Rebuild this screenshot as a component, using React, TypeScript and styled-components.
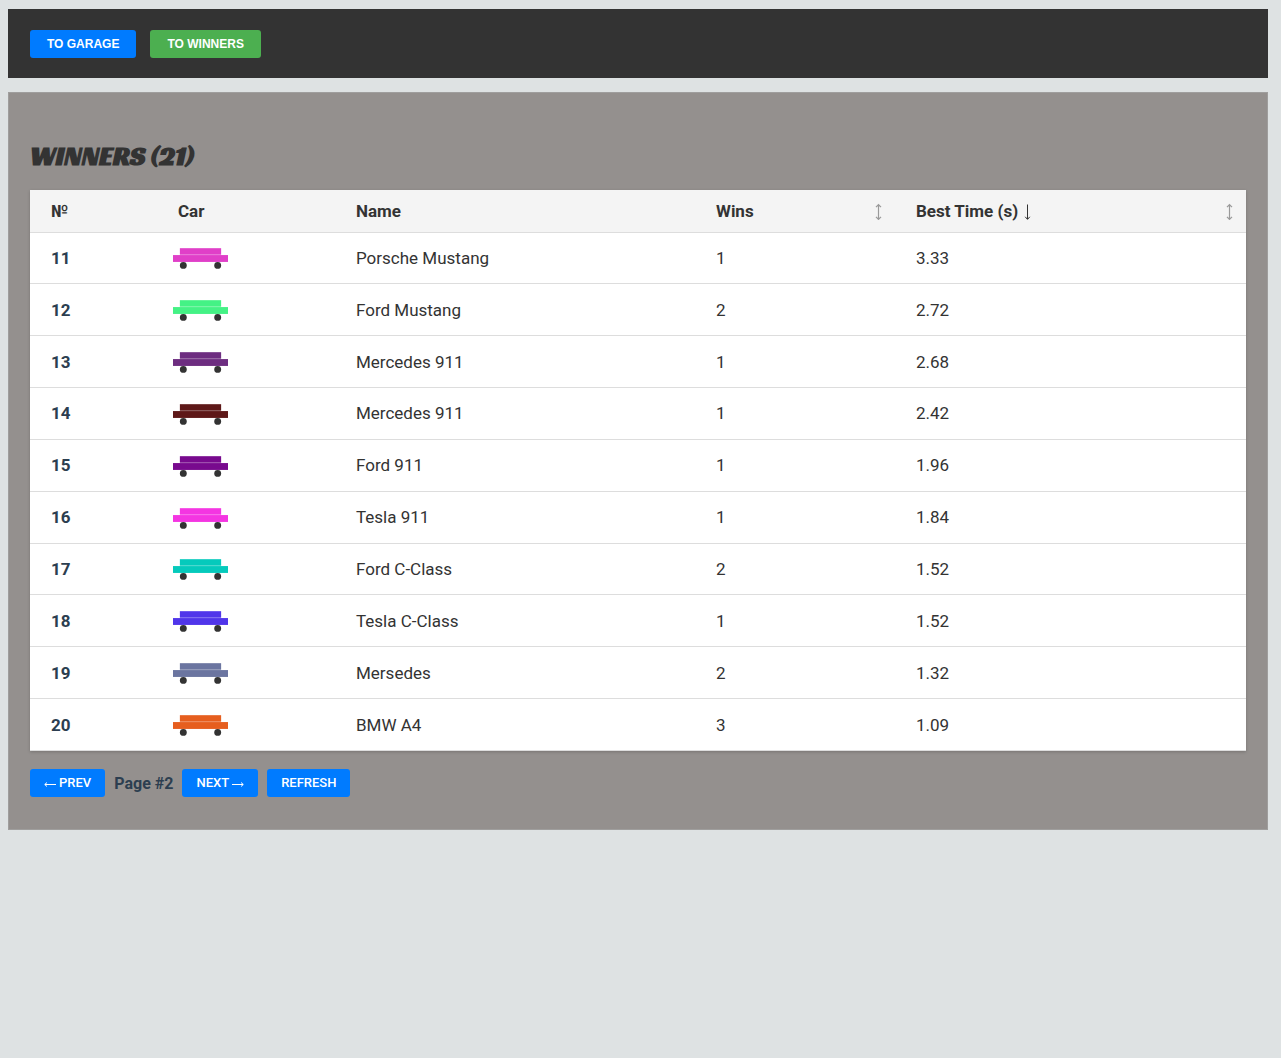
import React from 'react';
import styled, { createGlobalStyle } from 'styled-components';

const GlobalStyle = createGlobalStyle`
  * { box-sizing: border-box; }
  body {
    margin: 9px 13px 9px 8px;
    background: #dee2e3;
    color: #333;
    font-family: Roboto, sans-serif;
  }
`;

const Nav = styled.nav`
  display: flex;
  gap: 14px;
  padding: 21px 22px 20px;
  margin-bottom: 14px;
  background: #333;
`;

const NavButton = styled.button<{ $color: string }>`
  height: 28px;
  padding: 0 17px;
  border: none;
  border-radius: 3px;
  background: ${(p) => p.$color};
  color: #fff;
  font: bold 12px 'Liberation Sans', Arial, sans-serif;
  text-transform: uppercase;
  cursor: pointer;
`;

const Panel = styled.main`
  padding: 48px 21px 32px;
  border: 1px solid #9f9e9d;
  background: #94908e;
`;

const Title = styled.h1`
  margin: 0 0 19px;
  font: 700 27px/30px 'Racing Sans One', Lato, sans-serif;
  text-transform: uppercase;
`;

const Table = styled.table`
  width: 100%;
  height: 561px;
  table-layout: fixed;
  border-collapse: collapse;
  background: #fff;
  box-shadow: 0 1px 3px rgba(0, 0, 0, 0.2);
`;

const Col = styled.col<{ $width?: number }>`
  width: ${(p) => (p.$width ? `${p.$width}px` : 'auto')};
`;

const HeadCell = styled.th`
  height: 42px;
  padding: 0 12px 0 21px;
  border-bottom: 1px solid #ddd;
  background: #f4f4f4;
  font-size: 17px;
  font-weight: 700;
  line-height: 20px;
  text-align: left;
`;

const SortButton = styled.button`
  display: flex;
  justify-content: space-between;
  align-items: center;
  width: 100%;
  padding: 0;
  border: none;
  background: none;
  color: inherit;
  font: inherit;
  cursor: pointer;
`;

const SortLabel = styled.span`
  display: flex;
  align-items: center;
  gap: 5px;
`;

const ArrowIcon = styled.svg<{ $muted?: boolean }>`
  flex: none;
  fill: none;
  stroke: ${(p) => (p.$muted ? '#999' : 'currentColor')};
  stroke-width: ${(p) => (p.$muted ? 1.2 : 1)};
`;

const Cell = styled.td`
  padding: 0 21px;
  border-bottom: 1px solid #ddd;
  font-size: 17px;
`;

const NumberCell = styled(Cell)`
  color: #2c3e50;
  font-weight: 700;
`;

const CarCell = styled(Cell)`
  padding: 2px 16px 0;
`;

const CarIcon = styled.svg`
  display: block;
  width: 55px;
  height: 21px;
`;

const Pager = styled.div`
  display: flex;
  align-items: center;
  gap: 9px;
  margin-top: 18px;
`;

const PagerButton = styled.button`
  display: flex;
  align-items: center;
  gap: 3px;
  height: 28px;
  padding: 0 14px;
  border: none;
  border-radius: 3px;
  background: #007bff;
  color: #fff;
  font: 500 13px/16px Roboto, 'Liberation Sans', sans-serif;
  text-transform: uppercase;
  cursor: pointer;
`;

const PageLabel = styled.span`
  color: #2c3e50;
  font-size: 16px;
  font-weight: 700;
`;

const winners = [
  { id: 11, color: '#e03fc8', name: 'Porsche Mustang', wins: 1, time: '3.33' },
  { id: 12, color: '#44f285', name: 'Ford Mustang', wins: 2, time: '2.72' },
  { id: 13, color: '#6d2d80', name: 'Mercedes 911', wins: 1, time: '2.68' },
  { id: 14, color: '#5e1818', name: 'Mercedes 911', wins: 1, time: '2.42' },
  { id: 15, color: '#780a8e', name: 'Ford 911', wins: 1, time: '1.96' },
  { id: 16, color: '#f435e2', name: 'Tesla 911', wins: 1, time: '1.84' },
  { id: 17, color: '#05cabc', name: 'Ford C-Class', wins: 2, time: '1.52' },
  { id: 18, color: '#5035ea', name: 'Tesla C-Class', wins: 1, time: '1.52' },
  { id: 19, color: '#6b75a0', name: 'Mersedes', wins: 2, time: '1.32' },
  { id: 20, color: '#e65e1e', name: 'BMW A4', wins: 3, time: '1.09' },
];

function Car({ color }: { color: string }) {
  return (
    <CarIcon viewBox="0 0 80 30" aria-hidden="true">
      <rect x="10" y="0" width="60" height="9.5" fill={color} />
      <rect x="0" y="10" width="80" height="10" fill={color} />
      <circle cx="15" cy="25" r="5" fill="#333" />
      <circle cx="65" cy="25" r="5" fill="#333" />
    </CarIcon>
  );
}

const arrowPaths = {
  both: 'M4.5 3V17M2 5.2L4.5 2.6L7 5.2M2 14.8L4.5 17.4L7 14.8',
  down: 'M4.5 2.5V17M2.2 14.8L4.5 17.4L6.8 14.8',
};

function SortArrow({ kind, muted }: { kind: 'both' | 'down'; muted?: boolean }) {
  return (
    <ArrowIcon $muted={muted} width="9" height="18" viewBox="0 0 9 18" aria-hidden="true">
      <path d={arrowPaths[kind]} />
    </ArrowIcon>
  );
}

function PageArrow({ next }: { next?: boolean }) {
  return (
    <ArrowIcon width="12" height="8" viewBox="0 0 12 8" aria-hidden="true">
      <path d={next ? 'M0 5.5H11M9 3.5L11.3 5.5L9 7.5' : 'M12 5.5H1M3 3.5L0.7 5.5L3 7.5'} />
    </ArrowIcon>
  );
}

export default function App() {
  return (
    <>
      <GlobalStyle />
      <Nav>
        <NavButton $color="#007bff">To garage</NavButton>
        <NavButton $color="#4caf50">To winners</NavButton>
      </Nav>
      <Panel>
        <Title>Winners (21)</Title>
        <Table>
          <colgroup>
            <Col $width={127} />
            <Col $width={178} />
            <Col $width={360} />
            <Col $width={200} />
            <Col />
          </colgroup>
          <thead>
            <tr>
              <HeadCell>№</HeadCell>
              <HeadCell>Car</HeadCell>
              <HeadCell>Name</HeadCell>
              <HeadCell>
                <SortButton>
                  <span>Wins</span>
                  <SortArrow kind="both" muted />
                </SortButton>
              </HeadCell>
              <HeadCell aria-sort="descending">
                <SortButton>
                  <SortLabel>
                    Best Time (s)
                    <SortArrow kind="down" />
                  </SortLabel>
                  <SortArrow kind="both" muted />
                </SortButton>
              </HeadCell>
            </tr>
          </thead>
          <tbody>
            {winners.map((w) => (
              <tr key={w.id}>
                <NumberCell>{w.id}</NumberCell>
                <CarCell>
                  <Car color={w.color} />
                </CarCell>
                <Cell>{w.name}</Cell>
                <Cell>{w.wins}</Cell>
                <Cell>{w.time}</Cell>
              </tr>
            ))}
          </tbody>
        </Table>
        <Pager>
          <PagerButton>
            <PageArrow />
            Prev
          </PagerButton>
          <PageLabel>Page #2</PageLabel>
          <PagerButton>
            Next
            <PageArrow next />
          </PagerButton>
          <PagerButton>Refresh</PagerButton>
        </Pager>
      </Panel>
    </>
  );
}
